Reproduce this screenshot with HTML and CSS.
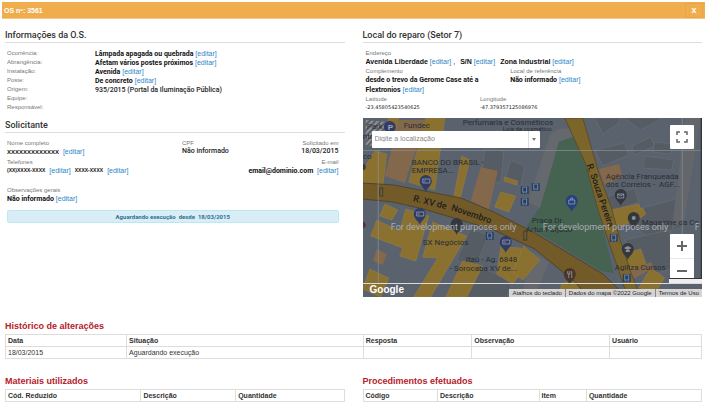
FILE: index.html
```html
<!DOCTYPE html>
<html lang="pt-BR">
<head>
  <meta charset="UTF-8">
  <meta name="viewport" content="width=device-width, initial-scale=1">
  <title>Ordem de Serviço</title>
  <link rel="stylesheet" href="styles.css">
</head>

<body>
  <header class="topbar">
    <span>OS nº: 3561</span>
    <button class="close-btn" type="button">x</button>
  </header>

  <main class="content">
    <div class="columns top">
      <section>
        <h2>Informações da O.S.</h2>
        <dl class="info">
          <dt>Ocorrência:</dt>
          <dd><b>Lâmpada apagada ou quebrada</b> <a href="#">[editar]</a></dd>
          <dt>Abrangência:</dt>
          <dd><b>Afetam vários postes próximos</b> <a href="#">[editar]</a></dd>
          <dt>Instalação:</dt>
          <dd><b>Avenida</b> <a href="#">[editar]</a></dd>
          <dt>Poste:</dt>
          <dd><b>De concreto</b> <a href="#">[editar]</a></dd>
          <dt>Origem:</dt>
          <dd><span class="semi">935/2015 (Portal da Iluminação Pública)</span></dd>
          <dt>Equipe:</dt>
          <dd></dd>
          <dt>Responsável:</dt>
          <dd></dd>
        </dl>

        <h2>Solicitante</h2>
        <div class="person">
          <div class="field">
            <span class="lbl">Nome completo</span>
            <div><b class="mask name">XXXXXXXXXXXXX</b>&nbsp; <a href="#">[editar]</a></div>
          </div>
          <div class="field">
            <span class="lbl">CPF</span>
            <div class="semi">Não informado</div>
          </div>
          <div class="field right">
            <span class="lbl">Solicitado em</span>
            <div class="semi">18/03/2015</div>
          </div>
        </div>
        <div class="person contact">
          <div class="field phones">
            <span class="lbl">Telefones</span>
            <div class="phone-list">
              <b class="mask">(XX)XXXX-XXXX</b> <a href="#">[editar]</a>
              <b class="mask">XXXX-XXXX</b> <a href="#">[editar]</a>
            </div>
          </div>
          <div class="field right">
            <span class="lbl">E-mail</span>
            <div><b>email@dominio.com</b>&nbsp; <a href="#">[editar]</a></div>
          </div>
        </div>
        <div class="field notes">
          <span class="lbl">Observações gerais</span>
          <div><b>Não informado</b> <a href="#">[editar]</a></div>
        </div>
        <div class="alert">Aguardando execução&nbsp; desde&nbsp; 18/03/2015</div>
      </section>

      <section>
        <h2>Local do reparo (Setor 7)</h2>
        <div class="place">
          <div class="field">
            <span class="lbl">Endereço</span>
            <div class="address">
              <span><b>Avenida Liberdade</b> <a href="#">[editar]</a> ,</span>
              <span><b>S/N</b> <a href="#">[editar]</a></span>
              <span><b>Zona Industrial</b> <a href="#">[editar]</a></span>
            </div>
          </div>
          <div class="refs">
            <div class="field">
              <span class="lbl">Complemento</span>
              <div><b>desde o trevo da Gerome Case até a Flextronios</b> <a href="#">[editar]</a></div>
            </div>
            <div class="field">
              <span class="lbl">Local de referência</span>
              <div><b>Não informado</b> <a href="#">[editar]</a></div>
            </div>
          </div>
          <div class="coords">
            <div class="field">
              <span class="lbl">Latitude</span>
              <div class="coord">-23.45805423540625</div>
            </div>
            <div class="field">
              <span class="lbl">Longitude</span>
              <div class="coord">-47.379357125086976</div>
            </div>
          </div>
        </div>

        <div class="map">
          <svg class="map-canvas" viewBox="0 0 340 179" preserveAspectRatio="xMidYMid slice">
            <defs>
              <pattern id="hatch" width="4" height="4" patternUnits="userSpaceOnUse" patternTransform="rotate(45)">
                <rect width="4" height="4" fill="#5c6066"/>
                <rect width="2" height="4" fill="#8e9196"/>
              </pattern>
              <path id="pin" d="M0 10 C-1 6 -6 4 -6 -1 A6 6 0 0 1 6 -1 C6 4 1 6 0 10Z"/>
              <g id="bus">
                <rect x="-4" y="-4" width="8" height="8" rx="1" fill="#263f66"/>
                <rect x="-2" y="-3" width="4" height="5" fill="none" stroke="#8794a8" stroke-width="0.8"/>
                <path d="M-2 3h1M1 3h1" stroke="#8794a8"/>
              </g>
            </defs>
            <rect width="340" height="179" fill="#5a626d"/>

            <!-- gray buildings and lanes -->
            <g fill="#565c64" stroke="#6a7077" stroke-width="0.6">
              <path d="M122 31 L141 33 L138 65 L118 61Z"/>
              <path d="M148 42 L162 48 L158 68 L142 62Z"/>
              <path d="M108 110 L126 118 L112 150 L94 142Z"/>
              <path d="M118 150 L150 162 L144 179 L104 179Z"/>
              <path d="M232 0 L258 0 L255 6 L240 16Z"/>
              <path d="M262 0 L300 0 L278 12Z"/>
              <path d="M232 32 L262 25 L266 37 L240 48Z"/>
              <path d="M269 28 L288 19 L292 28 L272 37Z"/>
              <path d="M292 24 L310 26 L308 36 L290 34Z"/>
              <path d="M282 38 L311 42 L309 52 L280 50Z"/>
              <path d="M240 80 L272 70 L276 84 L246 94Z"/>
              <path d="M256 96 L318 80 L322 108 L286 120Z"/>
              <path d="M262 122 L306 112 L312 150 L284 158Z"/>
            </g>
            <path d="M322 0 L338 0 L322 100 L309 112 Z" fill="#63666b"/>
            <path d="M187 17 Q196 8 209 11 L211 19 L200 23 L177 90 L165 84Z" fill="#65686c"/>
            <path d="M170 134 L186 144 L172 179 L158 179Z" fill="#65686c"/>

            <!-- shops -->
            <g fill="#8a712f" stroke="#9a8048" stroke-width="0.5">
              <path d="M26 0 L36 0 L32 18 L22 14Z"/>
              <path d="M63 0 L82 0 L72 72 L46 64Z"/>
              <path d="M12 33 L24 36 L20 68 L0 64 L0 52Z"/>
              <path d="M99 38 L107 42 L97 82 L91 79Z"/>
              <path d="M142 59 L155 63 L154 67 L141 63Z"/>
              <path d="M138 74 L153 78 L146 94 L132 89Z"/>
              <path d="M22 86 L35 92 L29 102 L17 98Z"/>
              <path d="M43 91 L66 98 L53 143 L37 138 L40 130 L8 118 L14 102 L37 113Z"/>
              <path d="M70 104 L104 118 L68 179 L51 179 L75 140 L60 139Z"/>
              <path d="M7 151 L26 160 L18 179 L0 171Z"/>
              <path d="M100 143 L120 148 L104 179 L83 179Z"/>
              <path d="M138 129 L158 130 L166 144 L150 166 L134 156Z"/>
              <path d="M161 128 L177 142 L160 162 L150 154Z"/>
              <path d="M248 92 L276 86 L280 98 L260 108 L252 106Z"/>
              <path d="M260 136 L278 131 L283 145 L274 158 L263 153Z"/>
              <path d="M199 165 L212 164 L222 179 L196 179Z"/>
              <path d="M288 150 L302 160 L294 172 L276 170Z"/>
              <path d="M272 93 L280 90 L283 96 L276 101Z"/>
            </g>
            <g fill="#84684c">
              <path d="M36 2 L63 2 L42 65 L22 58Z"/>
              <path d="M118 49 L135 53 L126 92 L108 83Z"/>
              <path d="M14 131 L24 136 L20 147 L10 143Z"/>
              <path d="M236 51 L256 46 L260 59 L242 67Z"/>
              <path d="M266 154 L288 144 L291 150 L268 162Z"/>
            </g>
            <path d="M3 2 L24 4 L27 30 L3 27Z" fill="url(#hatch)"/>

            <!-- square -->
            <path d="M196 24 L210 19 L224 48 L236 93 L251 155 L238 153 L164 108 L178 88Z" fill="#456350"/>

            <!-- roads -->
            <path d="M0 65 L31 67 L98 80 L131 94 L172 115 L240 156 L264 179 L226 179 L211 163 L172 131 L131 112 L61 91 L30 84 L0 81Z" fill="#725b28" stroke="#4f452b"/>
            <path d="M202 0 L220 0 L236 55 L248 88 L258 124 L268 154 L278 179 L265 179 L246 124 L235 91 L223 46Z" fill="#7c652b" stroke="#5b4d2c"/>

            <!-- pins -->
            <g>
              <use href="#pin" x="63" y="64" fill="#303c66"/>
              <use href="#pin" x="57" y="97" fill="#303c66"/>
              <use href="#pin" x="143" y="125" fill="#303c66"/>
              <use href="#pin" x="209" y="84" fill="#24427f"/>
              <use href="#pin" x="258" y="78" fill="#34383e"/>
              <use href="#pin" x="94" y="107" fill="#34383e"/>
              <use href="#pin" x="271" y="101" fill="#34383e"/>
              <use href="#pin" x="265" y="132" fill="#34383e"/>
              <use href="#pin" x="207" y="157" fill="#4b3524"/>
              <circle cx="27" cy="9" r="6" fill="#303c66"/>
              <circle cx="0" cy="49" r="3" fill="#34383e"/>
              <circle cx="0" cy="107" r="3" fill="#5c2f40"/>
              <text x="25" y="12" class="park">P</text>
              <g fill="none" stroke="#98a0b4" stroke-width="0.8">
                <path d="M60 61h7v4h-7zM54 94h7v4h-7zM140 122h7v4h-7zM61 63h2M55 96h2M141 124h2"/>
                <path d="M206 82h6v4h-6zM208 82v-2h2v2M255 76h6v4h-6zM255 76l3 2 3-2"/>
                <path d="M205 153v3h2v-3M206 156v4M209 160v-7"/>
              </g>
              <path d="M261 130l4-2 4 2-4 2zM263 132v2h4v-2" fill="#8b8e92"/>
              <circle cx="271" cy="100" r="2" fill="#8b8e92"/>
            </g>
            <use href="#bus" x="162" y="72"/>
            <use href="#bus" x="162" y="84"/>
            <use href="#bus" x="173" y="69"/>
            <use href="#bus" x="127" y="118"/>
            <use href="#bus" x="251" y="120"/>
            <use href="#bus" x="264" y="160"/>
            <g fill="none" stroke="#3f3e36">
              <rect x="17" y="70" width="3" height="8"/>
              <rect x="161" y="113" width="3" height="9"/>
            </g>

            <!-- place names -->
            <g class="places">
              <text x="4" y="11">Park</text>
              <text x="0" y="21">nto</text>
              <text x="0" y="41">co</text>
              <text x="41" y="10">Fundec</text>
              <text x="100" y="7">Perfumaria e Cosméticos</text>
              <text x="140" y="13" class="minor">Loja de cosmético</text>
              <text x="49" y="47">BANCO DO BRASIL -</text>
              <text x="49" y="55">EMPRESA...</text>
              <text x="60" y="127">SX Negócios</text>
              <text x="103" y="144">Itaú - Ag. 6848</text>
              <text x="87" y="153">- Sorocaba XV de...</text>
              <text x="169" y="105">Praça Dr.</text>
              <text x="163" y="114">Artur Farjado</text>
              <text x="243" y="61">Agência Franqueada</text>
              <text x="243" y="69">dos Correios - &#160;AGF...</text>
              <text x="279" y="107">Magazine da Co</text>
              <text x="252" y="152">Agiliza Cursos</text>
            </g>
            <g class="streets">
              <text transform="translate(50 83) rotate(14)">R. XV de</text>
              <text transform="translate(88 92) rotate(19)">Novembro</text>
              <text transform="translate(224 47) rotate(71)">R. Souza Pereira</text>
            </g>
            <g class="watermark">
              <text x="28" y="112">For development purposes only</text>
              <text x="180" y="112">For development purposes only</text>
              <text x="332" y="112">F</text>
            </g>
            <path d="M0 32.500H340M15.500 32V166M319.500 0V166" stroke="#8a8f96" stroke-width="0.7" fill="none"/>
            <path d="M339 0V165" stroke="#31353c" stroke-width="2"/>
            <path d="M0 165.500H340" stroke="#dadada"/>
          </svg>

          <div class="map-search">
            <input type="text" placeholder="Digite a localização" aria-label="Localização">
            <button type="button" aria-label="Abrir lista"><svg viewBox="0 0 6 4"><path d="M1 0h4L3 3z" fill="#777"/></svg></button>
          </div>

          <button class="map-btn fullscreen" type="button" aria-label="Tela cheia">
            <svg viewBox="0 0 12 12"><path d="M1 4V1h3M8 1h3v3M11 8v3H8M4 11H1V8" fill="none" stroke="#666" stroke-width="1.500"/></svg>
          </button>
          <div class="zoom">
            <button type="button" aria-label="Aumentar zoom"><svg viewBox="0 0 12 12"><path d="M6 1v10M1 6h10" stroke="#666" stroke-width="2"/></svg></button>
            <button type="button" aria-label="Diminuir zoom"><svg viewBox="0 0 12 12"><path d="M1 6h10" stroke="#666" stroke-width="2"/></svg></button>
          </div>
          <div class="map-tip"></div>
          <span class="google">Google</span>
          <div class="map-credits">
            <a href="#">Atalhos do teclado</a>
            <span>Dados do mapa ©2022 Google</span>
            <a href="#">Termos de Uso</a>
          </div>
        </div>
      </section>
    </div>

    <section class="history">
      <h3>Histórico de alterações</h3>
      <table class="hist-table">
        <thead>
          <tr><th>Data</th><th>Situação</th><th>Resposta</th><th>Observação</th><th>Usuário</th></tr>
        </thead>
        <tbody>
          <tr><td>18/03/2015</td><td>Aguardando execução</td><td></td><td></td><td></td></tr>
        </tbody>
      </table>
    </section>

    <div class="columns">
      <section>
        <h3>Materiais utilizados</h3>
        <table class="mat-table">
          <thead>
            <tr><th>Cód. Reduzido</th><th>Descrição</th><th>Quantidade</th></tr>
          </thead>
        </table>
      </section>
      <section>
        <h3>Procedimentos efetuados</h3>
        <table class="proc-table">
          <thead>
            <tr><th>Código</th><th>Descrição</th><th>Item</th><th>Quantidade</th></tr>
          </thead>
        </table>
      </section>
    </div>
  </main>
</body>
</html>
```

FILE: styles.css
```css
* {
  box-sizing: border-box;
}

body {
  margin: 0;
  padding: 2px 2px 0;
  background: #fff;
  color: #222;
  font-family: "Liberation Sans", Arial, sans-serif;
  font-size: 7px;
  line-height: 9px;
}

button {
  padding: 0;
  border: 0;
  background: none;
  font: inherit;
  cursor: pointer;
}

a {
  color: #2c86c7;
  text-decoration: none;
}

b {
  color: #111;
  font-family: Roboto, sans-serif;
}

.topbar {
  display: flex;
  justify-content: space-between;
  align-items: center;
  height: 17px;
  padding: 0 2px;
  background: #f0ad4e;
  border-bottom: 1px solid #f5c887;
  color: #fff;
  font-weight: bold;
}

.close-btn {
  width: 18px;
  height: 15px;
  border: 1px solid #eca440;
  border-radius: 2px;
  color: #fff;
  font-size: 9px;
}

.content {
  padding: 0 3px;
}

.columns {
  display: grid;
  grid-template-columns: 1fr 1fr;
  column-gap: 18px;
}

.top {
  padding-top: 11px;
}

h2 {
  margin: 0 0 6px;
  padding-bottom: 1px;
  border-bottom: 1px solid #ddd;
  color: #333;
  font-family: Roboto, sans-serif;
  font-size: 9px;
  font-weight: 500;
  line-height: 11px;
}

/* Informações da O.S. */
.info {
  display: grid;
  grid-template-columns: 88px 1fr;
  grid-auto-rows: 9px;
  margin: 0 0 8px;
  padding-left: 2px;
}

.info dt,
.lbl {
  color: #777;
  font-size: 6px;
}

.info dd {
  margin: 0;
}

.lbl {
  display: block;
  line-height: 8px;
}

.semi {
  color: #222;
  font-family: Roboto, sans-serif;
  font-weight: 500;
}

/* Solicitante */
.person {
  display: grid;
  grid-template-columns: 175px 1fr auto;
  padding: 0 6px 0 2px;
  margin-bottom: 1px;
}

.contact {
  grid-template-columns: 1fr auto;
}

.right {
  text-align: right;
}

.mask {
  font-family: "Liberation Sans", Arial, sans-serif;
  font-size: 5px;
}

.name {
  font-size: 6px;
}

.phone-list {
  display: flex;
  gap: 4px;
}

.notes {
  margin-top: 10px;
  padding-left: 2px;
}

.alert {
  margin: 6px 6px 0 2px;
  padding: 1px;
  border: 1px solid #bce8f1;
  border-radius: 2px;
  background: #d9edf7;
  color: #31708f;
  font-family: Roboto, sans-serif;
  font-size: 6px;
  font-weight: bold;
  text-align: center;
}

/* Local do reparo */
.place {
  padding-left: 3px;
}

.address {
  display: flex;
  gap: 5px;
  line-height: 10px;
}

.address b {
  font-family: "Liberation Sans", Arial, sans-serif;
}

.refs {
  display: grid;
  grid-template-columns: 43% 1fr;
  line-height: 10px;
}

.refs .field:first-child {
  padding-right: 20px;
}

.coords {
  display: grid;
  grid-template-columns: 34% 1fr;
}

.coord {
  font-size: 5px;
  font-family: "DejaVu Sans", sans-serif;
}

/* Mapa */
.map {
  position: relative;
  height: 179px;
  margin-top: 6px;
  overflow: hidden;
}

.map-canvas {
  display: block;
  width: 100%;
  height: 100%;
}

.places {
  fill: #292d34;
  font-family: Roboto, sans-serif;
  font-size: 8px;
}

.places .minor {
  font-size: 6px;
}

.park {
  fill: #a0a6b8;
  font-size: 8px;
  font-weight: bold;
}

.streets {
  fill: #1d1d1d;
  font-family: Roboto, sans-serif;
  font-size: 9px;
  font-weight: 500;
}

.watermark {
  fill: #a9adb3;
  font-family: Roboto, sans-serif;
  font-size: 9px;
}

.map-search {
  position: absolute;
  top: 13px;
  left: 9px;
  display: flex;
  width: 168px;
  height: 17px;
  border-radius: 1px;
  background: #fff;
}

.map-search input {
  flex: 1;
  min-width: 0;
  padding: 0 3px 3px;
  border: 0;
  background: none;
  font: inherit;
}

.map-search input::placeholder {
  color: #888;
}

.map-search button {
  width: 12px;
  border-left: 1px solid #ddd;
}

.map-search svg {
  width: 6px;
}

.map-btn,
.zoom {
  position: absolute;
  right: 8px;
  width: 24px;
  border-radius: 1px;
  background: #fff;
}

.map-btn {
  top: 7px;
  height: 24px;
}

.map-btn svg,
.zoom svg {
  display: block;
  width: 12px;
  margin: 0 auto;
}

.zoom {
  top: 116px;
  height: 48px;
}

.zoom button {
  display: block;
  width: 100%;
  height: 24px;
}

.zoom button + button {
  border-top: 1px solid #e6e6e6;
}

.map-tip {
  position: absolute;
  right: 0;
  top: 160px;
  width: 33px;
  height: 5px;
  border-top: 1px solid #333;
  background: #eee;
}

.google {
  position: absolute;
  left: 7px;
  bottom: 2px;
  color: #fff;
  font-size: 10px;
  font-weight: bold;
  line-height: 11px;
}

.map-credits {
  position: absolute;
  right: 0;
  bottom: 0;
  display: flex;
  background: #d5d5d5;
  color: #222;
  font-size: 6px;
  line-height: 8px;
}

.map-credits a {
  color: #222;
}

.map-credits > * {
  padding: 0 3px;
}

.map-credits > * + * {
  border-left: 1px solid #888;
}

/* Tabelas */
.history {
  margin: 24px 0 17px;
}

h3 {
  margin: 0 0 2px;
  color: #b5202a;
  font-size: 9px;
  line-height: 11px;
}

table {
  width: 100%;
  border-collapse: collapse;
  table-layout: fixed;
}

th,
td {
  height: 12px;
  padding: 0 2px;
  border: 1px solid #ddd;
  color: #333;
  text-align: left;
}

.hist-table th:nth-child(1) { width: 17.4%; }
.hist-table th:nth-child(2) { width: 34%; }
.hist-table th:nth-child(3) { width: 15.6%; }
.hist-table th:nth-child(4) { width: 19.8%; }

.mat-table th:nth-child(1) { width: 40%; }
.mat-table th:nth-child(2) { width: 28%; }

.proc-table th:nth-child(1) { width: 22%; }
.proc-table th:nth-child(2) { width: 30%; }
.proc-table th:nth-child(3) { width: 14%; }
```
